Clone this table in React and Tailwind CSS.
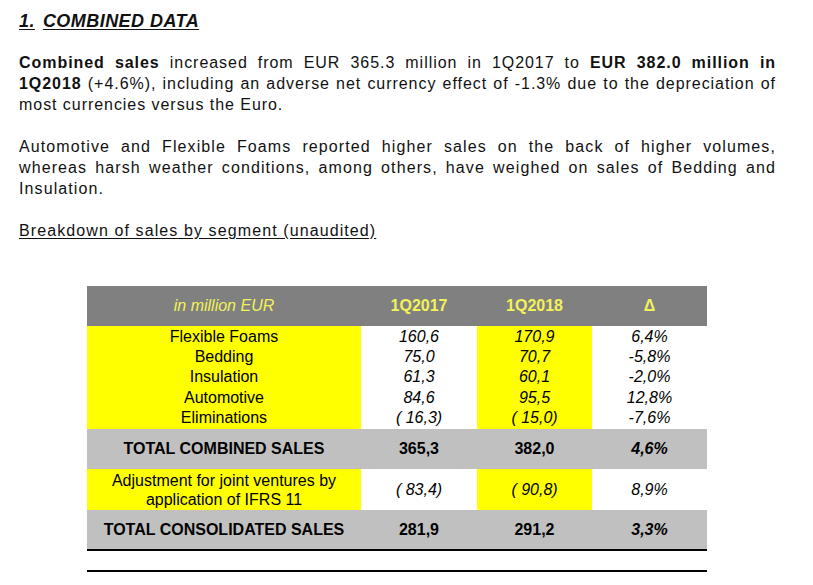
import React from 'react';

const segments = [
  { name: 'Flexible Foams', a: '160,6', b: '170,9', d: '6,4%' },
  { name: 'Bedding', a: '75,0', b: '70,7', d: '-5,8%' },
  { name: 'Insulation', a: '61,3', b: '60,1', d: '-2,0%' },
  { name: 'Automotive', a: '84,6', b: '95,5', d: '12,8%' },
  { name: 'Eliminations', a: '( 16,3)', b: '( 15,0)', d: '-7,6%' },
];

const cols = 'grid grid-cols-[274px_116px_115px_115px]';

const SalesTable = () => (
  <div className="w-[620px] ml-[68px] mt-[45px] text-[16px] text-black">
    {/* Header */}
    <div className={`${cols} h-[40px] bg-[#808080] text-[#f2f25a] items-center text-center`}>
      <div className="italic">in million EUR</div>
      <div className="font-bold">1Q2017</div>
      <div className="font-bold">1Q2018</div>
      <div className="font-bold">Δ</div>
    </div>

    {/* Segments */}
    <div className={`${cols} text-center leading-[20.4px]`}>
      <div className="bg-[#ffff00] py-[0.5px]">
        {segments.map((s) => <div key={s.name}>{s.name}</div>)}
      </div>
      <div className="italic py-[0.5px]">
        {segments.map((s) => <div key={s.name}>{s.a}</div>)}
      </div>
      <div className="italic bg-[#ffff00] py-[0.5px]">
        {segments.map((s) => <div key={s.name}>{s.b}</div>)}
      </div>
      <div className="italic py-[0.5px]">
        {segments.map((s) => <div key={s.name}>{s.d}</div>)}
      </div>
    </div>

    {/* Total combined */}
    <div className={`${cols} h-[40px] bg-[#c0c0c0] items-center text-center font-bold`}>
      <div>TOTAL COMBINED SALES</div>
      <div>365,3</div>
      <div>382,0</div>
      <div className="italic">4,6%</div>
    </div>

    {/* Adjustment */}
    <div className={`${cols} h-[41px] text-center leading-[19px]`}>
      <div className="bg-[#ffff00] flex items-center justify-center">
        <div>Adjustment for joint ventures by<br />application of IFRS 11</div>
      </div>
      <div className="italic flex items-center justify-center">( 83,4)</div>
      <div className="italic bg-[#ffff00] flex items-center justify-center">( 90,8)</div>
      <div className="italic flex items-center justify-center">8,9%</div>
    </div>

    {/* Total consolidated */}
    <div className={`${cols} h-[39px] bg-[#c0c0c0] items-center text-center font-bold border-b-2 border-black box-content`}>
      <div>TOTAL CONSOLIDATED SALES</div>
      <div>281,9</div>
      <div>291,2</div>
      <div className="italic">3,3%</div>
    </div>

    <div className="mt-[19px] h-[2px] bg-black" />
  </div>
);

export default function App() {
  return (
    <div className="w-[813px] h-[585px] bg-white overflow-hidden pl-[19px] pt-[10px] text-[#111] font-['Liberation_Sans',Arial,sans-serif]">
      <h1 className="text-[18px] leading-[22px] font-bold italic tracking-[0.45px]">
        <span className="underline underline-offset-2">1.</span>
        <span className="ml-[8px] underline underline-offset-2">COMBINED DATA</span>
      </h1>

      <div className="w-[757px] text-[16px] leading-[21px] text-justify">
        <p className="mt-[20px] tracking-[0.95px]">
          <b>Combined sales</b> increased from EUR 365.3 million in 1Q2017 to <b>EUR 382.0 million in 1Q2018</b> (+4.6%), including an adverse net currency effect of -1.3% due to the depreciation of most currencies versus the Euro.
        </p>
        <p className="mt-[21px] tracking-[1.1px]">
          Automotive and Flexible Foams reported higher sales on the back of higher volumes, whereas harsh weather conditions, among others, have weighed on sales of Bedding and Insulation.
        </p>
        <p className="mt-[21px] underline underline-offset-2 tracking-[1.1px]">
          Breakdown of sales by segment (unaudited)
        </p>
      </div>

      <SalesTable />
    </div>
  );
}
